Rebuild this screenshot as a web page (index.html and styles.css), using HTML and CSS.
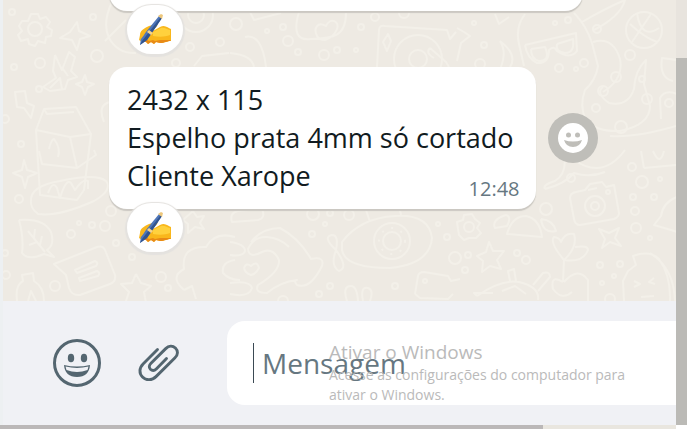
FILE: index.html
```html
<!DOCTYPE html>
<html lang="pt-BR">
<head>
    <meta charset="UTF-8">
    <meta name="viewport" content="width=device-width, initial-scale=1.0">
    <title>Conversa</title>
    <link rel="stylesheet" href="styles.css">
</head>
<body>
    <svg class="symbols" aria-hidden="true">
        <symbol id="writing-hand" viewBox="0 0 36 34">
            <path fill="#f9b71c" d="M3 22C3 17 8 15 12 13L19 11C22 11 20 14 17 16L16 18L23 14C28 11 31 15 34 16V28C30 28 28 30 23 30L19 29L17 31L14 29L11 31L9 29L5 29L2 27Z"/>
            <path fill="#e88a16" d="M5 28L9 26L12 28L16 27L18 28L23 27L33 27L34 28C30 28 28 30 23 30L19 29L17 31L14 29L11 31L9 29L5 29Z"/>
            <path fill="#ffd13d" d="M16 19L24 15C28 14 30 17 33 17V22C28 24 22 24 16 23Z"/>
            <path fill="#4f76b8" d="M22 3L25 5L10 27L3 32L4 25L13 14Z"/>
            <path fill="#31548f" d="M25 5L10 27L3 32L5 28L23 5Z"/>
            <path fill="#edc77c" d="M21 3L24 1L26 2L25 6Z"/>
            <path fill="#f5d388" d="M12 17L16 20L14 22L10 19Z"/>
            <path fill="#f9b71c" d="M3 23L10 16L7 22L4 26Z"/>
        </symbol>
    </svg>

    <main class="chat">
        <svg class="wallpaper" viewBox="3 0 673 301" preserveAspectRatio="xMidYMid slice" aria-hidden="true">
            <!-- gear, bow, bolt, milk -->
            <path d="M31 14L38 14L40 19L46 17L50 22L47 27L52 30L51 36L46 37L45 43L38 41L35 46L29 44L28 39L21 41L18 35L22 31L19 26L22 21L28 21Z"/>
            <path d="M77 22L79 31L90 36L80 39L77 50L72 40L60 38L70 32ZM85 75L87 82L94 84L88 87L85 95L82 87L76 84L82 82ZM24 160L27 170L37 173L28 177L25 188L22 177L13 173L22 170Z"/>
            <path d="M55 55L62 70L69 52L75 57L71 71L77 77L68 80L65 89L50 91L43 87L56 78L53 71L55 55M50 88L60 78L62 89M63 69L68 76"/>
            <path d="M15 92L25 91L27 103L34 106L31 118L24 108L17 107Z"/>
            <path d="M44 109L76 107L91 134L84 190L77 200L40 195L36 130ZM44 109L47 114L74 112M36 130L70 137L91 134M70 137L77 168M49 149Q51 140 54 139Q61 148 58 157"/>
            <path d="M112 2Q102 23 109 38Q118 54 136 53M105 41Q116 30 126 20M110 102Q97 105 104 122M230 53Q252 55 254 67M245 37Q262 33 266 67"/>
            <!-- heart cloud, turntable -->
            <path d="M250 12L254 20L281 13M299 12C293 32 297 41 311 39C333 38 346 37 346 13M317 36C313 28 318 21 326 26C330 17 340 21 337 29Q334 37 325 40Q319 40 317 36"/>
            <path d="M377 67L379 30Q379 25 385 26L447 30L450 39L456 32M388 34L391 41L387 51L383 42ZM430 48L446 62L449 67M430 48Q425 53 434 58"/>
            <path d="M194 66L202 56L229 53M457 28L464 32L470 36L461 43L457 61M495 14L499 24L509 17M500 41Q518 55 510 67M500 41Q507 52 501 67"/>
            <!-- ghost, tentacles, ball -->
            <path d="M525 14Q515 27 519 44L524 66M574 13Q586 25 592 43L598 66Q596 80 585 90Q579 106 586 120Q596 132 620 131Q650 125 650 106L644 84L646 60Q635 70 634 89Q628 107 609 103Q595 93 603 87"/>
            <path d="M525 45L576 33L577 51Q570 60 557 51Q554 45 549 50Q549 64 537 63Q527 58 525 45M531 49L545 47Q551 61 539 61Q531 59 531 49M557 44L573 39Q575 53 565 53Q555 52 557 44"/>
            <path d="M582 22Q604 9 625 0Q621 16 594 30M593 42Q613 36 620 59Q624 79 603 92M630 24Q645 38 657 42M637 13Q641 40 659 28M651 14Q641 29 632 42"/>
            <path d="M677 60L662 58Q659 78 673 81M661 119L660 98Q665 89 677 94M610 136Q635 138 676 126"/>
            <!-- bread, leaf, card, bottle -->
            <path d="M39 151L42 164L77 168L96 155L94 150M31 201Q30 186 60 181Q96 173 106 181Q113 190 94 201Q58 217 38 214Q30 208 31 201M48 193Q53 180 57 188L60 198Q66 178 71 183L75 190Q83 178 88 181L88 189"/>
            <path d="M19 220Q44 218 51 232Q55 245 47 250L54 257L44 254Q28 261 22 253Q24 238 19 220M28 231L45 252M34 238L35 229M37 242L29 245M40 245L42 236"/>
            <path d="M54 264L97 247Q103 245 105 250L115 275Q116 282 110 284L80 295Q72 296 69 288L66 275ZM75 270L95 261Q99 263 96 266L77 273ZM79 278L97 271Q101 273 98 276L80 281Z"/>
            <path d="M17 301Q15 285 23 281L22 275L33 273L34 281Q44 287 44 301M28 301L31 291L36 301"/>
            <path d="M136 274L141 283L151 286L144 292L146 303M136 274L132 283L121 284L129 292L126 301M193 211L197 217L204 216L200 223L204 229L195 227L188 233L188 224L183 220Z"/>
            <path d="M184 290Q169 277 184 269Q181 246 206 247Q215 231 235 237M184 290L192 286L196 299M235 260Q221 262 223 273Q229 280 240 280"/>
            <!-- hands, submarine -->
            <path d="M230 242Q245 244 245 251Q243 257 230 255M230 294Q249 298 252 288Q250 280 230 283M232 222Q229 213 238 211L262 209Q266 218 258 220Z"/>
            <path d="M251 242Q262 228 280 228Q299 238 311 259Q325 256 322 266Q310 290 297 285Q293 280 297 280Q280 282 267 293Q254 293 258 285Q280 272 279 260Q273 247 262 252Q249 259 248 249Q254 236 267 237Q280 238 289 247"/>
            <path d="M244 268Q246 262 251 266Q257 260 259 268Q256 274 251 275Q245 273 244 268M342 242Q360 218 395 216Q429 214 432 238Q430 264 390 268Q345 268 342 250ZM366 210L370 222M400 210L401 215M336 250Q322 237 332 235Q339 235 336 250Q330 266 339 271Q349 268 336 250"/>
            <path d="M415 294L418 276Q419 272 424 272L448 276L451 281L460 279M415 294L420 298L448 299L453 294M347 301Q342 286 351 286Q357 286 358 301M363 301Q360 286 368 288Q374 290 370 301"/>
            <!-- crab, camera, tulip, turtle, ice cream -->
            <path d="M507 234Q512 216 526 216Q540 219 542 237ZM506 215Q491 220 495 228L507 226Q512 217 506 215M541 219Q553 220 556 231Q543 234 541 219"/>
            <path d="M570 198Q570 193 576 192L585 190L590 184L602 182L606 187L614 185L619 213Q619 217 614 219L580 225Q575 225 574 219ZM588 190L597 188"/>
            <path d="M464 215L472 214L475 219L480 223L477 228L481 233L476 238L469 238L464 240L459 235L458 229L457 222L463 220ZM489 242L493 251L504 251L497 260L501 269L490 266L482 272L483 261L477 256L486 252Z"/>
            <path d="M564 260Q549 242 554 237Q560 238 561 242Q565 232 574 234Q578 247 564 260M575 247Q588 245 588 250Q583 263 564 260L563 282M563 282Q550 274 553 289Q562 301 572 292M564 282Q578 266 588 280L588 301"/>
            <path d="M599 229L609 233L619 228L615 238L621 246L610 242L602 248L605 239ZM677 197Q663 202 661 216L654 225L671 230L677 232"/>
            <path d="M477 296Q501 279 519 282Q540 287 538 300M477 296L474 293L493 293M510 281L508 271L514 269L516 281M533 285L543 273Q550 271 550 277L538 291M502 291L515 286L526 294"/>
            <path d="M624 301L623 281L628 271L636 265L633 256Q650 250 659 259Q671 276 670 301M650 253Q674 268 675 301M634 281L640 284L634 287M654 278L649 282L655 284M641 297L654 296"/>
            <path d="M574 160Q603 180 625 150M545 189Q565 184 574 173Q590 178 605 172M545 189Q542 185 555 181Q569 172 563 150M644 168L676 165M644 168L641 151M653 151Q660 167 664 151"/>
            <g>
                <circle cx="35" cy="29" r="7"/><circle cx="12" cy="12" r="3"/><circle cx="93" cy="17" r="3"/><circle cx="40" cy="63" r="5"/><circle cx="14" cy="67" r="3"/><circle cx="97" cy="56" r="6"/><circle cx="39" cy="89" r="3"/><circle cx="21" cy="144" r="3"/><circle cx="5" cy="119" r="4"/>
                <circle cx="196" cy="15" r="17"/><circle cx="196" cy="15" r="8"/><circle cx="220" cy="42" r="4"/><circle cx="190" cy="47" r="4"/><circle cx="176" cy="63" r="4"/><circle cx="236" cy="24" r="6"/><circle cx="267" cy="31" r="2"/><circle cx="283" cy="27" r="3"/><circle cx="288" cy="41" r="5"/><circle cx="298" cy="52" r="3"/><circle cx="324" cy="55" r="5"/><circle cx="337" cy="50" r="3"/><circle cx="356" cy="50" r="2"/><circle cx="361" cy="27" r="3"/><circle cx="375" cy="17" r="4"/><circle cx="404" cy="13" r="5"/>
                <circle cx="418" cy="59" r="24"/><circle cx="418" cy="59" r="9"/><circle cx="484" cy="45" r="3"/><circle cx="480" cy="64" r="5"/><circle cx="474" cy="23" r="2"/><circle cx="568" cy="20" r="3"/><circle cx="555" cy="23" r="2"/><circle cx="584" cy="63" r="4"/><circle cx="576" cy="69" r="2"/><circle cx="559" cy="68" r="4"/><circle cx="644" cy="30" r="18"/><circle cx="630" cy="55" r="5"/><circle cx="597" cy="29" r="4"/><circle cx="616" cy="77" r="5"/><circle cx="603" cy="91" r="5"/><circle cx="596" cy="108" r="4"/><circle cx="621" cy="127" r="6"/><circle cx="647" cy="99" r="5"/><circle cx="642" cy="79" r="3"/><circle cx="669" cy="103" r="4"/>
                <circle cx="19" cy="199" r="4"/><circle cx="71" cy="234" r="4"/><circle cx="79" cy="223" r="2"/><circle cx="92" cy="225" r="3"/><circle cx="105" cy="226" r="5"/><circle cx="111" cy="211" r="5"/><circle cx="116" cy="243" r="3"/><circle cx="132" cy="257" r="3"/><circle cx="161" cy="277" r="5"/><circle cx="168" cy="288" r="3"/><circle cx="55" cy="286" r="5"/><circle cx="6" cy="275" r="4"/><circle cx="5" cy="253" r="3"/>
                <circle cx="313" cy="214" r="6"/><circle cx="330" cy="213" r="3"/><circle cx="349" cy="215" r="5"/><circle cx="325" cy="224" r="2"/><circle cx="312" cy="234" r="3"/><circle cx="392" cy="241" r="18"/><circle cx="392" cy="241" r="9"/><circle class="dots" cx="392" cy="241" r="13"/><circle cx="438" cy="224" r="2"/><circle cx="447" cy="237" r="3"/><circle cx="455" cy="258" r="6"/><circle cx="425" cy="281" r="2"/><circle cx="395" cy="286" r="3"/><circle cx="330" cy="286" r="3"/><circle cx="319" cy="294" r="3"/><circle cx="283" cy="301" r="5"/>
                <circle cx="469" cy="227" r="5"/><circle cx="546" cy="209" r="6"/><circle cx="595" cy="206" r="10"/><circle cx="595" cy="206" r="4"/><circle cx="608" cy="192" r="2"/><circle cx="571" cy="178" r="4"/><circle cx="632" cy="167" r="4"/><circle cx="642" cy="182" r="6"/><circle cx="660" cy="179" r="2"/><circle cx="633" cy="197" r="3"/><circle cx="654" cy="197" r="3"/><circle cx="635" cy="211" r="4"/><circle cx="636" cy="228" r="5"/><circle cx="650" cy="238" r="2"/><circle cx="526" cy="260" r="4"/><circle cx="517" cy="253" r="3"/><circle cx="468" cy="255" r="3"/><circle cx="465" cy="270" r="3"/><circle cx="600" cy="265" r="3"/><circle cx="620" cy="264" r="3"/><circle cx="614" cy="276" r="2"/><circle cx="602" cy="283" r="2"/><circle cx="610" cy="299" r="5"/>
            </g>
        </svg>

        <div class="message message-previous">
            <div class="bubble"></div>
            <button class="reaction" aria-label="Reação"><svg><use href="#writing-hand"/></svg></button>
        </div>
        <div class="message">
            <div class="bubble">
                <p>2432 x 115<br>Espelho prata 4mm só cortado<br>Cliente Xarope</p>
                <time>12:48</time>
            </div>
            <button class="reaction" aria-label="Reação"><svg><use href="#writing-hand"/></svg></button>
            <button class="react" aria-label="Reagir">
                <svg viewBox="0 0 30 30">
                    <circle cx="15" cy="15" r="15" fill="#fff"/>
                    <circle cx="10.5" cy="12" r="2.5"/>
                    <circle cx="19.5" cy="12" r="2.5"/>
                    <path d="M6 17Q15 20 24 17Q22 24 15 24Q8 24 6 17"/>
                </svg>
            </button>
        </div>
    </main>

    <footer class="composer">
        <button class="icon" aria-label="Emojis">
            <svg viewBox="0 0 48 48">
                <circle cx="24" cy="24" r="22.5" fill="none" stroke="#546670" stroke-width="3"/>
                <ellipse cx="18" cy="19" rx="3.2" ry="4.3"/>
                <ellipse cx="31" cy="19" rx="3.2" ry="4.3"/>
                <path d="M11 26Q24 29 37 26Q36 38 24 38Q12 38 11 26"/>
                <path fill="#f0f1f5" d="M12.5 27.6Q24 30.4 35.5 27.6L34.5 31Q24 35 13.5 31Z"/>
            </svg>
        </button>
        <button class="icon" aria-label="Anexar">
            <svg viewBox="0 0 48 48">
                <path fill="none" stroke="#546670" stroke-width="2.9" stroke-linecap="round" d="M22.5 10.5L8.3 24.7C4 29 4 34.5 7.5 38C11 41.6 17 41.6 21 37.6L40 18.8C43.2 15.8 43.2 11.8 40.4 9C37.6 6.4 33.7 6.6 30.7 9.6L16 24.3C14 26.3 13.7 28.6 15.4 30.3C17.2 32 19.5 31.8 21.3 30L31.5 19.5"/>
            </svg>
        </button>
        <label class="field">
            <span class="caret"></span>
            <input type="text" placeholder="Mensagem" aria-label="Mensagem">
        </label>
    </footer>

    <div class="scroll-y"></div>
    <div class="scroll-x"></div>

    <div class="watermark">
        <strong>Ativar o Windows</strong>
        <p>Acesse as configurações do computador para ativar o Windows.</p>
    </div>
</body>
</html>
```
FILE: styles.css
```css
* {
    box-sizing: border-box;
}
body {
    margin: 0;
    min-height: 100vh;
    position: relative;
    display: grid;
    grid-template-columns: minmax(0, 1fr) 11px;
    grid-template-rows: 1fr auto 4px;
    font-family: "Segoe UI", "Open Sans", "Noto Sans", sans-serif;
    color: #111b21;
    background: #fff;
}
button {
    padding: 0;
    border: 0;
    background: none;
}
svg {
    display: block;
}
.symbols {
    position: absolute;
    width: 0;
    height: 0;
}

/* conversation */
.chat {
    position: relative;
    overflow: hidden;
    border-left: 3px solid #edf0f2;
    background: #eeeae3;
    padding-left: 106px;
}
.wallpaper {
    position: absolute;
    top: 0;
    left: 0;
    width: 100%;
    height: 100%;
    fill: none;
    stroke: #f3f0e9;
    stroke-width: 2;
    stroke-linejoin: round;
}
.wallpaper .dots {
    stroke-dasharray: 2 8;
}
.message {
    position: relative;
    display: flex;
    align-items: center;
    gap: 12px;
    margin-bottom: 56px;
}
.bubble {
    position: relative;
    padding: 14px 22px 14px 18px;
    border-radius: 18px;
    background: #fff;
    box-shadow: 0 2px 1px #cbc8c2;
}
.bubble p {
    margin: 0;
    font-size: 27px;
    line-height: 38px;
}
.bubble time {
    position: absolute;
    right: 16px;
    bottom: 6px;
    font-size: 20px;
    line-height: 28px;
    color: #667781;
}
.message-previous {
    margin-top: -40px;
}
.message-previous .bubble {
    width: 474px;
    height: 51px;
}
.reaction {
    position: absolute;
    left: 18px;
    bottom: -43px;
    width: 56px;
    height: 49px;
    border-radius: 25px;
    background: #fff;
    box-shadow: 0 1px 1px 2px #e4e2df;
}
.reaction svg {
    width: 36px;
    height: 34px;
    margin: 0 auto;
}
.react {
    width: 50px;
    height: 50px;
    border-radius: 50%;
    background: #bfbeb9;
}
.react svg {
    width: 30px;
    height: 30px;
    margin: 0 auto;
    fill: #bfbeb9;
}

/* message box */
.composer {
    grid-row: 2;
    display: flex;
    align-items: center;
    gap: 34px;
    padding: 20px 0 20px 50px;
    border-left: 3px solid #edf0f2;
    background: #f0f1f5;
}
.icon svg {
    width: 48px;
    height: 48px;
    fill: #546670;
}
.field {
    flex: 1;
    min-width: 0;
    display: flex;
    align-items: center;
    gap: 8px;
    height: 84px;
    margin-left: 10px;
    padding-left: 26px;
    border-radius: 18px 0 0 18px;
    background: #fff;
}
.caret {
    width: 1px;
    height: 40px;
    background: #3b4a54;
}
.field input {
    flex: 1;
    min-width: 0;
    padding: 0;
    border: 0;
    outline: 0;
    background: none;
    font: 28px/40px "Segoe UI", "Open Sans", "Noto Sans", sans-serif;
}
.field input::placeholder {
    color: #667781;
    opacity: 1;
}

/* scroll bars */
.scroll-y {
    grid-column: 2;
    grid-row: 1 / 3;
    background: linear-gradient(#e8e4de 58px, #bbbab6 58px);
}
.scroll-x {
    grid-row: 3;
    background: linear-gradient(90deg, #bbb8b8 543px, #e9e6df 543px);
}

.watermark {
    position: absolute;
    left: 329px;
    bottom: 24px;
    width: 320px;
    color: #bababa;
    pointer-events: none;
}
.watermark strong {
    display: block;
    font-weight: 400;
    font-size: 19px;
    line-height: 26px;
}
.watermark p {
    margin: 0;
    font-size: 14px;
    line-height: 20px;
}
```
